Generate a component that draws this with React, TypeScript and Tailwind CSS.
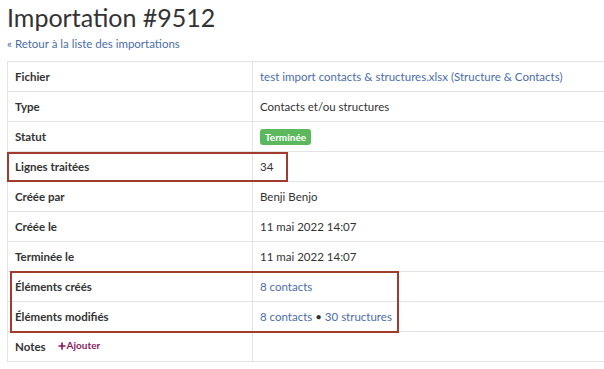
import { Plus } from 'lucide-react';

const rows: { label: string; value: React.ReactNode }[] = [
  {
    label: 'Fichier',
    value: <a className="text-[#4a6ea9]">test import contacts &amp; structures.xlsx (Structure &amp; Contacts)</a>,
  },
  { label: 'Type', value: 'Contacts et/ou structures' },
  {
    label: 'Statut',
    value: (
      <span className="inline-block rounded-[3px] bg-[#5cb85c] px-[5px] py-[2px] text-[10px] font-bold leading-[12px] text-white">
        Terminée
      </span>
    ),
  },
  { label: 'Lignes traitées', value: '34' },
  { label: 'Créée par', value: 'Benji Benjo' },
  { label: 'Créée le', value: '11 mai 2022 14:07' },
  { label: 'Terminée le', value: '11 mai 2022 14:07' },
  { label: 'Éléments créés', value: <a className="text-[#4a6ea9]">8 contacts</a> },
  {
    label: 'Éléments modifiés',
    value: (
      <>
        <a className="text-[#4a6ea9]">8 contacts</a> • <a className="text-[#4a6ea9]">30 structures</a>
      </>
    ),
  },
];

export default function App() {
  return (
    <div className="relative h-[369px] w-[604px] overflow-hidden bg-white font-['Lato',sans-serif] text-[#333]">
      <div className="pl-[7px]">
        <h1 className="pt-[1px] text-[25px] leading-[32px]">Importation #9512</h1>
        <a className="mt-[3px] block text-[11.5px] leading-[16px] text-[#4a6ea9]">« Retour à la liste des importations</a>

        <table className="mt-[9px] w-[620px] border-collapse text-[11.5px]">
          <tbody>
            {rows.map((r) => (
              <tr key={r.label} className="h-[30px]">
                <td className="w-[245px] border border-[#e3e3e3] px-[7px] font-bold">{r.label}</td>
                <td className="border border-[#e3e3e3] px-[7px]">{r.value}</td>
              </tr>
            ))}
            <tr className="h-[30px]">
              <td className="border border-[#e3e3e3] px-[7px]">
                <span className="font-bold">Notes</span>
                <span className="ml-[11px] inline-flex items-center text-[10px] font-bold text-[#8a1c5c]">
                  <Plus className="h-[10px] w-[10px]" strokeWidth={4} />
                  Ajouter
                </span>
              </td>
              <td className="border border-[#e3e3e3] px-[7px]"></td>
            </tr>
          </tbody>
        </table>
      </div>

      {/* annotation boxes */}
      <div className="absolute left-[7px] top-[152px] h-[30px] w-[281px] border-2 border-[#a33a2e]" />
      <div className="absolute left-[10px] top-[271px] h-[62px] w-[389px] border-2 border-[#a33a2e]" />
    </div>
  );
}
